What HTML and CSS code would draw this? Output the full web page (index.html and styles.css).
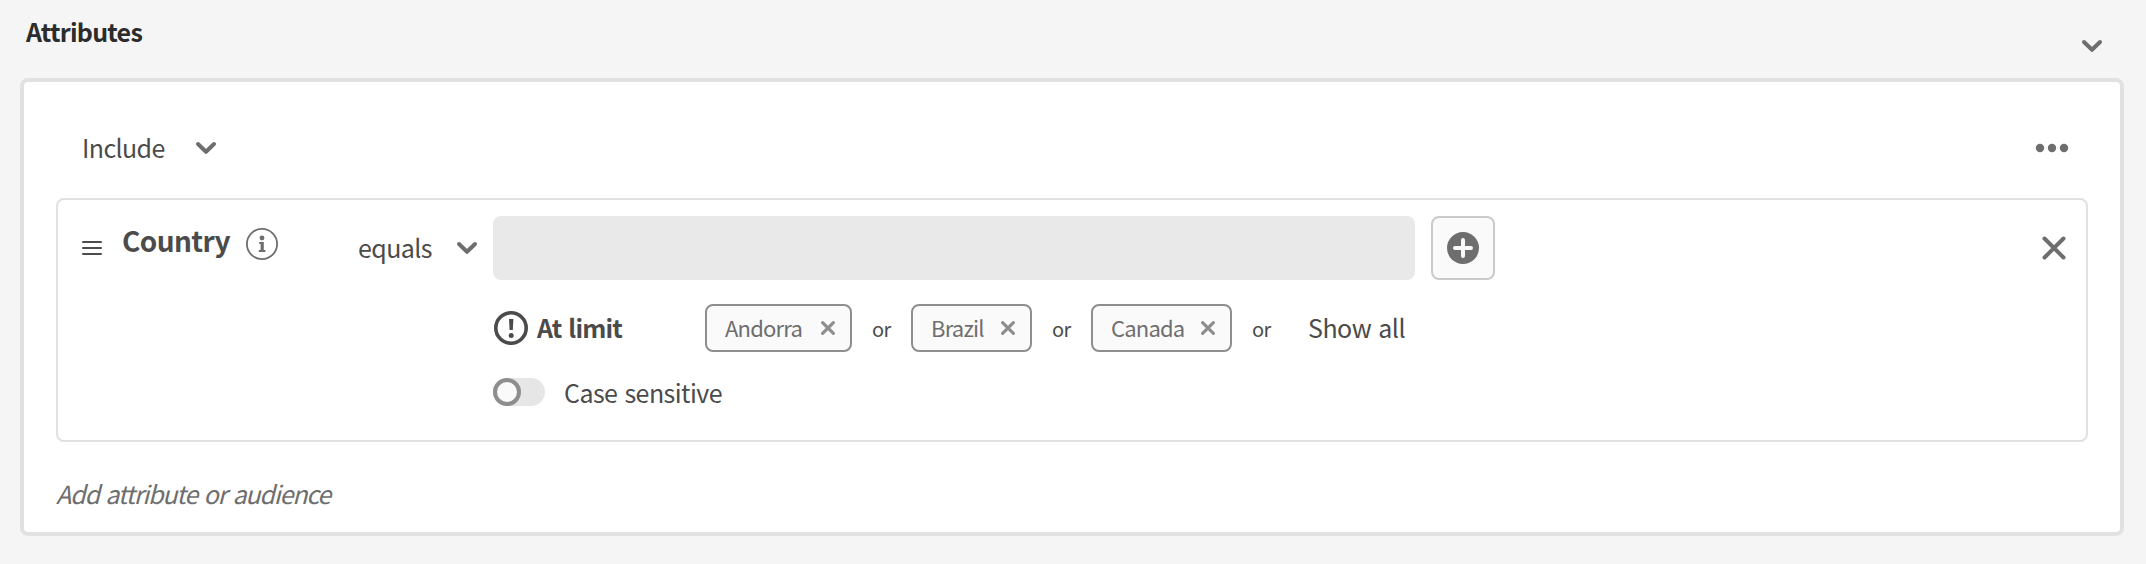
FILE: index.html
```html
<!DOCTYPE html>
<html lang="en">
<head>
<meta charset="utf-8">
<title>Attributes</title>
<link rel="stylesheet" href="styles.css">
</head>
<body>
<header class="header">
  <h2 class="title">Attributes</h2>
  <svg class="chevron header-chevron" viewBox="0 0 20 12"><path d="M2 2l8 7.8L18 2"/></svg>
</header>
<main class="panel">
  <div class="toolbar">
    <span class="include">Include</span>
    <svg class="chevron" viewBox="0 0 20 12"><path d="M2 2l8 7.8L18 2"/></svg>
    <svg class="more" viewBox="0 0 32 8"><circle cx="4" cy="4" r="4.2"/><circle cx="16" cy="4" r="4.2"/><circle cx="28" cy="4" r="4.2"/></svg>
  </div>
  <section class="card">
    <svg class="handle" viewBox="0 0 20 14"><path d="M1 1h18M1 7h18M1 13h18"/></svg>
    <h3 class="name">Country</h3>
    <svg class="info" viewBox="0 0 32 32"><circle cx="16" cy="16" r="15.1"/><circle class="fill" cx="16" cy="10" r="2.4"/><path class="fill" d="M13.2 14h4.6v8h1.6v2h-6.6v-2h1.8v-6h-1.4z"/></svg>
    <div class="operator">
      <span class="equals">equals</span>
      <svg class="chevron" viewBox="0 0 20 12"><path d="M2 2l8 7.8L18 2"/></svg>
    </div>
    <div class="values">
      <div class="entry">
        <div class="input"></div>
        <button class="add" aria-label="Add"><svg viewBox="0 0 32 32"><circle cx="16" cy="16" r="16"/><path d="M16 8v16M8 16h16"/></svg></button>
      </div>
      <div class="tags">
        <svg class="alert" viewBox="0 0 34 34"><circle cx="17" cy="17" r="15.2"/><path d="M15 8h4.4l-.6 11h-3.2z"/><circle class="dot" cx="17.2" cy="24.5" r="2.5"/></svg>
        <span class="limit">At limit</span>
        <span class="tag andorra"><span>Andorra</span><svg viewBox="0 0 14 14"><path d="M1.6 1.6l10.8 10.8M12.4 1.6L1.6 12.4"/></svg></span>
        <span class="or">or</span>
        <span class="tag brazil"><span>Brazil</span><svg viewBox="0 0 14 14"><path d="M1.6 1.6l10.8 10.8M12.4 1.6L1.6 12.4"/></svg></span>
        <span class="or">or</span>
        <span class="tag canada"><span>Canada</span><svg viewBox="0 0 14 14"><path d="M1.6 1.6l10.8 10.8M12.4 1.6L1.6 12.4"/></svg></span>
        <span class="or">or</span>
        <span class="show">Show all</span>
      </div>
      <div class="case">
        <span class="switch"><span class="knob"></span></span>
        <span class="case-label">Case sensitive</span>
      </div>
    </div>
    <svg class="close" viewBox="0 0 24 24"><path d="M2.5 2.5l19 19M21.5 2.5l-19 19"/></svg>
  </section>
  <p class="placeholder">Add attribute or audience</p>
</main>
</body>
</html>
```
FILE: styles.css
```css
* { box-sizing: border-box; }
body {
  margin: 0;
  height: 564px;
  background: #f5f5f5;
  color: #4b4b4b;
  font: 25px/32px "Noto Sans CJK SC", "Noto Sans", sans-serif;
  letter-spacing: -0.6px;
  word-spacing: 2px;
  white-space: nowrap;
  overflow: hidden;
}
h2, h3, p { margin: 0; }
svg { display: block; flex: none; overflow: visible; }
.header {
  display: flex;
  justify-content: space-between;
  height: 78px;
  padding: 15px 44px 0 26px;
}
.title { font-size: 25px; line-height: 32px; letter-spacing: -0.75px; color: #2c2c2c; }
.chevron {
  width: 20px;
  height: 12px;
  fill: none;
  stroke: #6e6e6e;
  stroke-width: 4;
  stroke-linecap: round;
  stroke-linejoin: round;
}
.header-chevron { margin-top: 25px; }
.panel {
  width: 2104px;
  height: 458px;
  margin-left: 20px;
  padding: 0 32px;
  border: 4px solid #e1e1e1;
  border-radius: 8px;
  background: #fff;
}
.toolbar {
  display: flex;
  align-items: center;
  height: 116px;
  padding: 16px 20px 0 26px;
}
.toolbar .include { width: 114px; padding-bottom: 2px; }
.more { width: 32px; height: 8px; margin-left: auto; fill: #6e6e6e; }
.card {
  display: flex;
  align-items: flex-start;
  width: 2032px;
  height: 244px;
  padding: 16px 21px 0 24px;
  border: 2px solid #e1e1e1;
  border-radius: 8px;
}
.handle {
  width: 20px;
  height: 14px;
  margin-top: 25px;
  fill: none;
  stroke: #4b4b4b;
  stroke-width: 2;
  stroke-linecap: round;
}
.name { width: 124px; margin: 4px 0 0 20px; font-size: 28px; line-height: 40px; }
.info { width: 32px; height: 32px; margin: 12px 80px 0 0; fill: none; stroke: #6e6e6e; stroke-width: 1.8; }
.info .fill { fill: #6e6e6e; stroke: none; }
.operator { display: flex; align-items: center; width: 135px; height: 64px; }
.equals { width: 99px; padding-bottom: 2px; }
.entry { display: flex; gap: 16px; }
.input { width: 922px; height: 64px; border-radius: 8px; background: #e9e9e9; }
.add {
  display: grid;
  place-items: center;
  width: 64px;
  height: 64px;
  padding: 0;
  border: 2px solid #cacaca;
  border-radius: 8px;
  background: #fafafa;
}
.add svg { width: 32px; height: 32px; fill: #6e6e6e; }
.add path { stroke: #fafafa; stroke-width: 4; stroke-linecap: round; }
.tags { display: flex; align-items: center; height: 48px; margin-top: 24px; }
.alert { width: 34px; height: 34px; margin-left: 1px; fill: #4b4b4b; }
.alert circle { fill: none; stroke: #4b4b4b; stroke-width: 3.6; }
.alert .dot { fill: #4b4b4b; stroke: none; }
.limit { width: 168px; margin-left: 9px; padding-bottom: 2px; font-weight: 700; letter-spacing: -0.8px; }
.tag {
  display: flex;
  align-items: center;
  justify-content: space-between;
  height: 48px;
  padding: 0 15px 0 18px;
  border: 2px solid #8e8e8e;
  border-radius: 8px;
  background: #fafafa;
  color: #6e6e6e;
  font-size: 22px;
  letter-spacing: -0.8px;
}
.tag > span { padding-bottom: 2px; }
.tag svg { width: 14px; height: 14px; fill: none; stroke: #8e8e8e; stroke-width: 3.2; stroke-linecap: round; }
.andorra { width: 147px; }
.brazil { width: 121px; }
.canada { width: 141px; }
.or { width: 39px; margin-left: 20px; font-size: 20px; padding-top: 1px; }
.show { margin-left: 17px; padding-bottom: 2px; letter-spacing: -0.5px; }
.case { display: flex; align-items: center; height: 32px; margin-top: 24px; }
.switch { width: 52px; height: 28px; border-radius: 14px; background: #e6e6e6; }
.knob { display: block; width: 28px; height: 28px; border: 4px solid #8e8e8e; border-radius: 50%; background: #fafafa; }
.case-label { margin-left: 19px; letter-spacing: -0.55px; }
.close { width: 24px; height: 24px; margin: 20px -1px 0 auto; fill: none; stroke: #6e6e6e; stroke-width: 4; stroke-linecap: round; }
.placeholder { margin-top: 35px; color: #6e6e6e; font-style: italic; letter-spacing: -1.15px; }
```
